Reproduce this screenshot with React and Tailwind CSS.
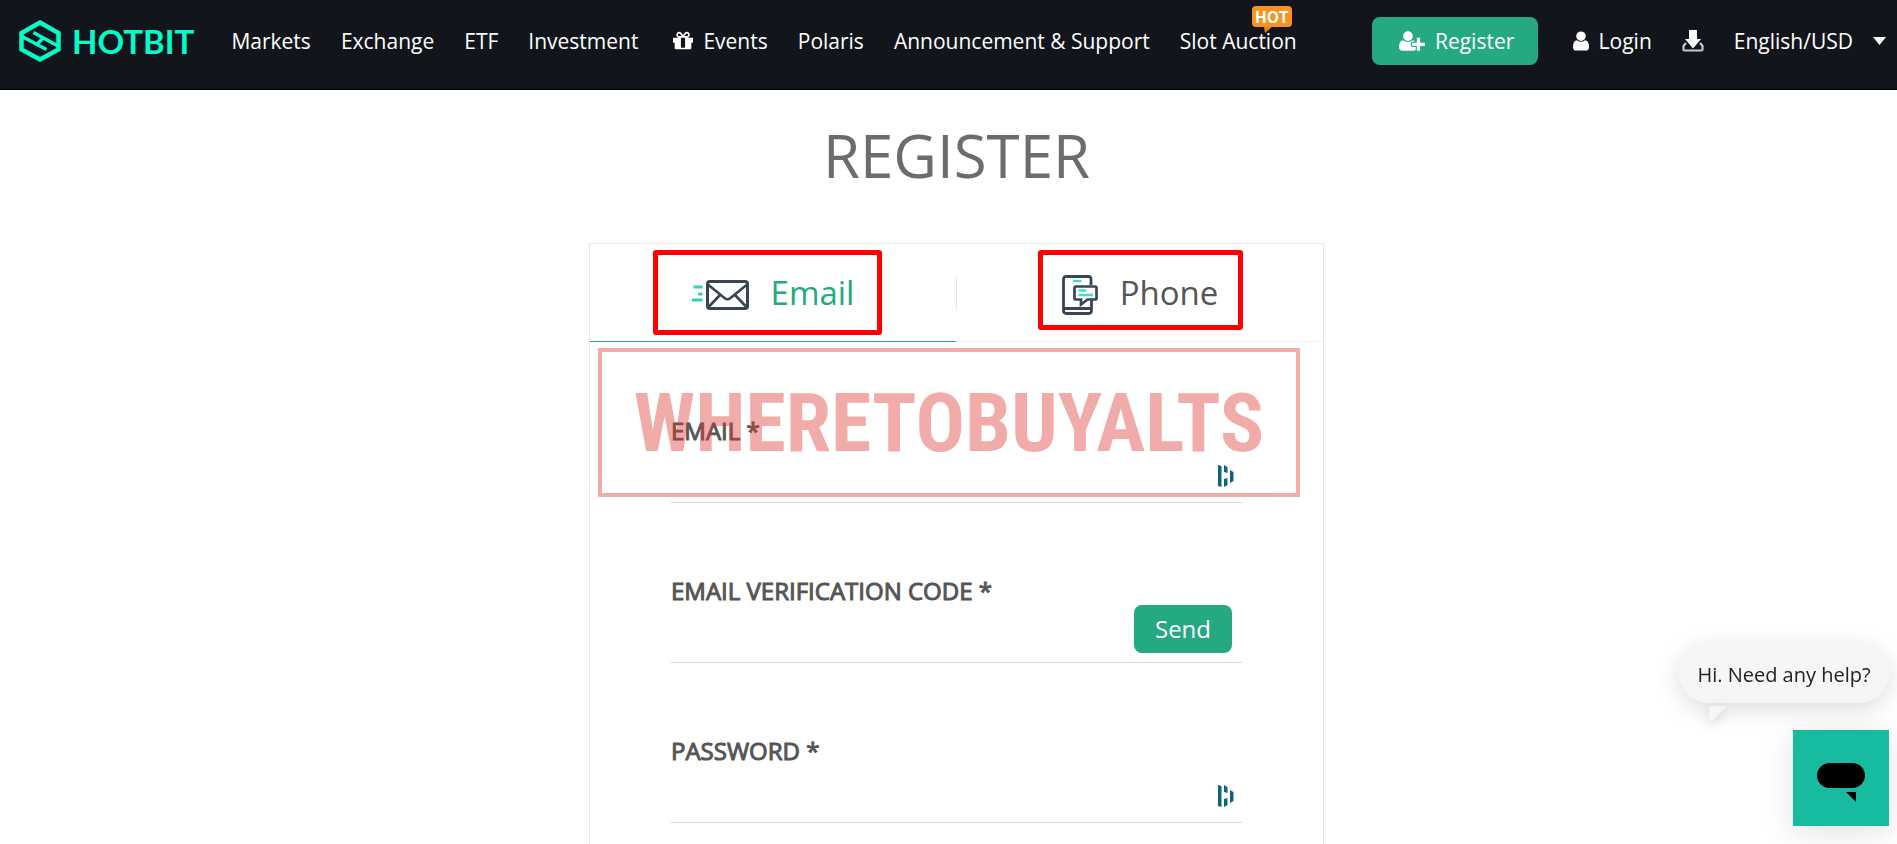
import { useState } from "react";

const navLinks = [
  { label: "Markets" },
  { label: "Exchange" },
  { label: "ETF" },
  { label: "Investment" },
  { label: "Events", icon: true },
  { label: "Polaris" },
  { label: "Announcement & Support" },
  { label: "Slot Auction", hot: true },
];

const GiftIcon = () => (
  <svg viewBox="128 128 1536 1536" className="h-5 w-5 shrink-0" fill="currentColor" aria-hidden="true">
    <path d="M1056 1356v-716h-320v716q0 25 18 38.5t46 13.5h192q28 0 46-13.5t18-38.5zm-456-844h195l-126-161q-26-31-69-31-40 0-68 28t-28 68 28 68 68 28zm688-96q0-40-28-68t-68-28q-43 0-69 31l-125 161h194q40 0 68-28t28-68zm376 256v320q0 14-9 23t-23 9h-96v416q0 40-28 68t-68 28h-1088q-40 0-68-28t-28-68v-416h-96q-14 0-23-9t-9-23v-320q0-14 9-23t23-9h440q-93 0-158.5-65.5t-65.5-158.5 65.5-158.5 158.5-65.5q107 0 168 77l128 165 128-165q61-77 168-77 93 0 158.5 65.5t65.5 158.5-65.5 158.5-158.5 65.5h440q14 0 23 9t9 23z" />
  </svg>
);

const UserIcon = () => (
  <svg viewBox="256 128 1280 1536" className="h-5 w-4 shrink-0" fill="currentColor" aria-hidden="true">
    <path d="M1536 1399q0 109-62.5 187t-150.5 78h-854q-88 0-150.5-78t-62.5-187q0-85 8.5-160.5t31.5-152 58.5-131 94-89 134.5-34.5q131 128 313 128t313-128q76 0 134.5 34.5t94 89 58.5 131 31.5 152 8.5 160.5zm-256-887q0 159-112.5 271.5t-271.5 112.5-271.5-112.5-112.5-271.5 112.5-271.5 271.5-112.5 271.5 112.5 112.5 271.5z" />
  </svg>
);

const UserPlusIcon = () => (
  <svg viewBox="0 128 2048 1536" className="h-5 w-[26px] shrink-0" fill="currentColor" aria-hidden="true">
    <path d="M704 896q-159 0-271.5-112.5t-112.5-271.5 112.5-271.5 271.5-112.5 271.5 112.5 112.5 271.5-112.5 271.5-271.5 112.5zm960 128h352q13 0 22.5 9.5t9.5 22.5v192q0 13-9.5 22.5t-22.5 9.5h-352v352q0 13-9.5 22.5t-22.5 9.5h-192q-13 0-22.5-9.5t-9.5-22.5v-352h-352q-13 0-22.5-9.5t-9.5-22.5v-192q0-13 9.5-22.5t22.5-9.5h352v-352q0-13 9.5-22.5t22.5-9.5h192q13 0 22.5 9.5t9.5 22.5v352zm-736 224q0 52 38 90t90 38h256v238q-68 50-171 50h-874q-121 0-194-69t-73-190q0-53 3.5-103.5t14-109 26.5-108.5 43-97.5 62-81 85.5-53.5 111.5-20q19 0 39 17 79 61 154.5 91.5t164.5 30.5 164.5-30.5 154.5-91.5q20-17 39-17 132 0 217 96h-223q-52 0-90 38t-38 90v192z" />
  </svg>
);

const DownloadIcon = () => (
  <svg viewBox="0 0 22 22" className="h-[22px] w-[22px]" fill="none" aria-hidden="true">
    <path d="M4 13 1.500 16v3.500q0 1 1 1h17q1 0 1-1V16L18 13" stroke="#c4c6c8" strokeWidth="2.200" />
    <path d="M7 0h8v9h4l-8 9.500L3 9h4z" fill="#fff" />
  </svg>
);

const LogoMark = () => (
  <svg viewBox="0 0 42 42" className="h-[42px] w-[42px]" fill="none" stroke="#05fcc9" aria-hidden="true">
    <path d="M21 2.500 39.500 13v16.500L21 39.500 2.500 29.500V13z" strokeWidth="4.500" />
    <path d="M14.500 12.500 39 26M3 16.500 27.500 29.500M24.500 18 17.500 24.500" strokeWidth="3.600" />
  </svg>
);

const MailIcon = () => (
  <svg viewBox="0 0 57 30" className="mt-1 h-[30px] w-[57px]" fill="none" aria-hidden="true">
    <path d="M1.500 7h9M6 14h4.500M0 20h10.500" stroke="#2fd3b3" strokeWidth="2.800" />
    <rect x="15.500" y="1.500" width="40" height="27" rx="2.500" stroke="#3a4456" strokeWidth="3" />
    <path d="m16.500 5 16 13q3 2.500 6 0l16-13M17 26.500l11-11.500M54 26.500 43 15" stroke="#3a4456" strokeWidth="2.600" />
  </svg>
);

const PhoneIcon = () => (
  <svg viewBox="0 0 36 40" className="mt-1 h-10 w-9" fill="none" aria-hidden="true">
    <path d="M29 10V4q0-2.500-2.500-2.500h-22Q1.500 1.500 1.500 4v31.500q0 3 3 3h22q3 0 3-3V25M2 33.500h27" stroke="#3a4456" strokeWidth="2.800" />
    <path d="M14 11.500h19q1.500 0 1.500 1.500v10q0 1.500-1.500 1.500h-7.500l-6.500 5v-5h-5q-1.500 0-1.500-1.500V13q0-1.500 1.500-1.500z" stroke="#3a4456" strokeWidth="2.700" />
    <path d="M11 6h8.500M16.500 15.500H24M16.500 20h14.500" stroke="#41dfc3" strokeWidth="2.700" />
  </svg>
);

const KeyBadge = () => (
  <svg viewBox="0 0 16 22" className="mt-[3px] mr-2 h-[22px] w-4" fill="#0e6478" aria-hidden="true">
    <path d="M0 0 3.500 1v21L0 21zM6 0l3.500 2v6L6 7zM6 14l3.500-1v7L6 22zM12 5l3.500 2v9L12 18z" />
  </svg>
);

const Field = ({ id, label, type = "text", children }) => (
  <div>
    <label htmlFor={id} className="block text-2xl leading-8 font-normal text-[#555] [-webkit-text-stroke:1px_#555]">
      {label}
    </label>
    <div className="flex h-14 items-center border-b border-[#d8d8d8]">
      <input id={id} type={type} className="h-full min-w-0 flex-1 bg-transparent text-2xl outline-none" />
      {children}
    </div>
  </div>
);

const Header = () => (
  <header className="flex h-[90px] items-center border-b border-black bg-[#12161c] pr-[11px] pb-2 pl-[19px] text-[21px] leading-8 whitespace-nowrap text-white">
    <a href="#" className="flex items-center gap-[11px]">
      <LogoMark />
      <span className="font-['Lato'] text-[33px] font-bold text-[#05fcc9]">HOTBIT</span>
    </a>
    <nav className="ml-[37px] flex items-center gap-[30px]">
      {navLinks.map(({ label, icon, hot }) => (
        <a key={label} href="#" className={`relative flex items-center gap-[10px] ${icon ? "ml-[5px]" : ""}`}>
          {icon && <GiftIcon />}
          {label}
          {hot && (
            <span className="absolute -top-[19px] right-[5px] flex h-[21px] w-10 items-center justify-center rounded-sm bg-[#f7931e] font-['Noto_Sans_CJK_SC',sans-serif] text-base leading-5 font-bold">
              HOT
              <svg viewBox="0 0 8 6" className="absolute top-[21px] left-3 h-[6px] w-2" fill="#e0851c" aria-hidden="true">
                <path d="M0 0h8L1 6z" />
              </svg>
            </span>
          )}
        </a>
      ))}
    </nav>
    <div className="ml-auto flex items-center">
      <button type="button" className="flex h-12 w-[166px] items-center justify-center gap-[10px] rounded-lg bg-[#25a982] pl-1">
        <UserPlusIcon />
        Register
      </button>
      <a href="#" className="ml-[35px] flex items-center gap-[10px]">
        <UserIcon />
        Login
      </a>
      <a href="#" aria-label="Download" className="ml-[30px]">
        <DownloadIcon />
      </a>
      <button type="button" className="ml-[30px] flex items-center gap-5">
        English/USD
        <svg viewBox="0 0 13 8" className="h-2 w-[13px]" fill="#fff" aria-hidden="true">
          <path d="M0 0h13L6.500 8z" />
        </svg>
      </button>
    </div>
  </header>
);

const ChatWidget = () => (
  <div className="fixed right-2 bottom-[18px] z-20 flex flex-col items-end gap-[27px]">
    <div className="relative flex h-[60px] w-[210px] items-center justify-center rounded-full bg-[#f4f6f8] pt-1 text-[20px] text-[#222] shadow-[0_6px_24px_rgba(0,0,0,0.14)]">
      Hi. Need any help?
      <svg viewBox="0 0 18 18" className="absolute top-[63px] left-[30px] h-[18px] w-[18px] drop-shadow-[0_3px_6px_rgba(0,0,0,0.15)]" fill="#f4f6f8" aria-hidden="true">
        <path d="M0 0h18L0 18z" />
      </svg>
    </div>
    <button type="button" aria-label="Open chat" className="flex h-24 w-24 items-center justify-center bg-[#17bca0] shadow-[0_6px_30px_rgba(0,0,0,0.12)]">
      <svg viewBox="0 0 48 48" className="h-12 w-12" aria-hidden="true">
        <rect y="9" width="48" height="25" rx="12.500" />
        <path d="M29 38h10v10z" />
      </svg>
    </button>
  </div>
);

const App = () => {
  const [tab, setTab] = useState("email");

  return (
    <div className="flex min-h-screen flex-col bg-white font-['Open_Sans',sans-serif]">
      <Header />
      <main className="flex flex-1 flex-col items-center pl-4">
        <h1 className="pt-[25px] text-[60px] leading-[80px] text-[#6a6d70]">REGISTER</h1>

        <section className="relative mt-12 flex w-full max-w-[735px] flex-1 flex-col border border-b-0 border-[#e5e5e5]">
          <div className="relative flex h-[98px] items-stretch text-[33px] leading-10">
            <button
              type="button"
              onClick={() => setTab("email")}
              className={`flex flex-1 items-center justify-center gap-[22px] border-b ${
                tab === "email" ? "border-[#25a982] text-[#25a982]" : "border-[#f0f0f0] text-[#555]"
              }`}
            >
              <MailIcon />
              Email
            </button>
            <span className="h-[34px] w-px self-center bg-[#e8e8e8]" />
            <button
              type="button"
              onClick={() => setTab("phone")}
              className={`flex flex-1 items-center justify-center gap-[22px] border-b ${
                tab === "phone" ? "border-[#25a982] text-[#25a982]" : "border-[#f0f0f0] text-[#555]"
              }`}
            >
              <PhoneIcon />
              Phone
            </button>
            {/* highlight frames over the two tabs */}
            <span className="pointer-events-none absolute top-[6px] left-[63px] h-[85px] w-[229px] rounded-[3px] border-5 border-[#f00]" />
            <span className="pointer-events-none absolute top-[6px] left-[448px] h-20 w-[205px] rounded-[3px] border-5 border-[#f00]" />
          </div>

          <form className="flex flex-col gap-[72px] px-[81px] pt-[73px]" onSubmit={(e) => e.preventDefault()}>
            <Field id="email" label="EMAIL *">
              <KeyBadge />
            </Field>
            <Field id="code" label="EMAIL VERIFICATION CODE *">
              <button type="button" className="mr-[10px] mb-3 h-12 w-[98px] rounded-lg bg-[#25a982] text-2xl text-white">
                Send
              </button>
            </Field>
            <Field id="password" label="PASSWORD *" type="password">
              <KeyBadge />
            </Field>
          </form>

          {/* translucent watermark stamp */}
          <div className="pointer-events-none absolute top-[104px] left-2 flex h-[149px] w-[702px] items-center justify-center border-4 border-[#e03935] text-[#e03935] opacity-[0.42]">
            <span className="font-['Roboto_Condensed',sans-serif] text-[82px] leading-none font-bold">
              WHERETOBUYALTS
            </span>
          </div>
        </section>
      </main>
      <ChatWidget />
    </div>
  );
};

export default App;
